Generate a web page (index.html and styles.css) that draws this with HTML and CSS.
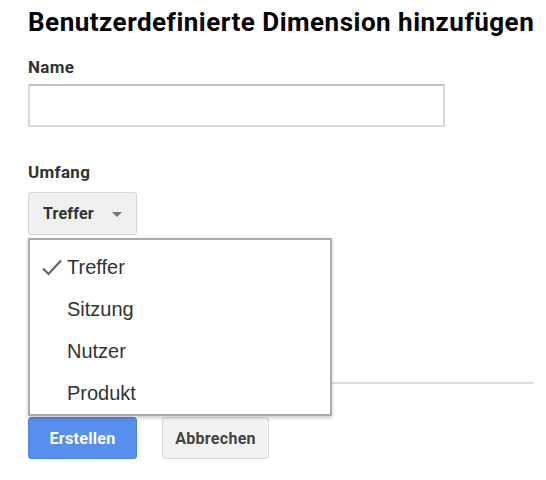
FILE: index.html
```html
<!DOCTYPE html>
<html lang="de">
<head>
  <meta charset="UTF-8" />
  <title>Benutzerdefinierte Dimension hinzufügen</title>
  <link rel="stylesheet" href="styles.css">
</head>
<body>
  <div class="page">
    <h1>Benutzerdefinierte Dimension hinzufügen</h1>

    <label class="field-label" for="dimName">Name</label>
    <input type="text" id="dimName" class="text-input" />

    <div class="field-label scope-label">Umfang</div>
    <div class="select-wrap">
      <button class="select-btn">Treffer <span class="caret"></span></button>

      <!-- Menü offen -->
      <ul class="menu">
        <li class="selected">
          <svg class="check" width="20" height="17" viewBox="0 0 20 17">
            <path d="M1 9.5 L6.5 15 L19 1.5" fill="none" stroke="#666" stroke-width="2.2"/>
          </svg>
          Treffer
        </li>
        <li>Sitzung</li>
        <li>Nutzer</li>
        <li>Produkt</li>
      </ul>
    </div>

    <div class="divider"></div>

    <div class="actions">
      <button class="btn btn-primary">Erstellen</button>
      <button class="btn">Abbrechen</button>
    </div>
  </div>
</body>
</html>
```

FILE: styles.css
```css
* {
  margin: 0;
  padding: 0;
  box-sizing: border-box;
}

body {
  background: #fff;
  font-family: Roboto, Arial, sans-serif;
  color: #333;
}

.page {
  padding: 6px 0 0 28px;
  width: 534px;
}

h1 {
  font-size: 26px;
  font-weight: 700;
  letter-spacing: 0.5px;
  color: #000;
  line-height: 32px;
  white-space: nowrap;
}

.field-label {
  display: block;
  font-size: 17px;
  font-weight: 700;
  letter-spacing: 0.3px;
  color: #333;
  line-height: 20px;
  margin-top: 19px;
}

.text-input {
  display: block;
  width: 417px;
  height: 43px;
  margin-top: 7px;
  border: 2px solid #d9d9d9;
  border-top-color: #c2c2c2;
  outline: none;
  font-size: 16px;
  padding: 0 10px;
}

.scope-label {
  margin-top: 35px;
}

.select-wrap {
  position: relative;
  margin-top: 10px;
  height: 43px;
}

.select-btn {
  display: flex;
  align-items: center;
  width: 109px;
  height: 43px;
  padding: 0 0 0 14px;
  background: #efefef;
  border: 1px solid #d6d6d6;
  border-radius: 3px;
  font-family: Roboto, Arial, sans-serif;
  font-size: 16px;
  font-weight: 700;
  letter-spacing: 0.2px;
  color: #333;
}

.caret {
  margin-left: 18px;
  margin-top: 2px;
  border-left: 5px solid transparent;
  border-right: 5px solid transparent;
  border-top: 5px solid #777;
}

.menu {
  position: absolute;
  top: 46px;
  left: 0;
  width: 304px;
  list-style: none;
  background: #fff;
  border: 2px solid #aaa;
  box-shadow: 0 2px 4px rgba(0, 0, 0, 0.2);
  padding-top: 6px;
  z-index: 10;
}

.menu li {
  position: relative;
  height: 42px;
  line-height: 42px;
  padding-left: 37px;
  font-family: "Liberation Sans", Arial, sans-serif;
  font-size: 20px;
  color: #333;
}

.check {
  position: absolute;
  left: 12px;
  top: 13px;
}

.divider {
  height: 2px;
  background: #e0e0e0;
  margin-top: 147px;
  width: 506px;
}

.actions {
  display: flex;
  gap: 25px;
  margin-top: 33px;
}

.btn {
  height: 42px;
  width: 107px;
  background: #f2f2f2;
  border: 1px solid #d9d9d9;
  border-radius: 3px;
  font-family: Roboto, Arial, sans-serif;
  font-size: 16px;
  font-weight: 700;
  letter-spacing: 0.3px;
  color: #444;
}

.btn-primary {
  width: 109px;
  background: #578ff0;
  border-color: #4a84e6;
  color: #fff;
}
```
